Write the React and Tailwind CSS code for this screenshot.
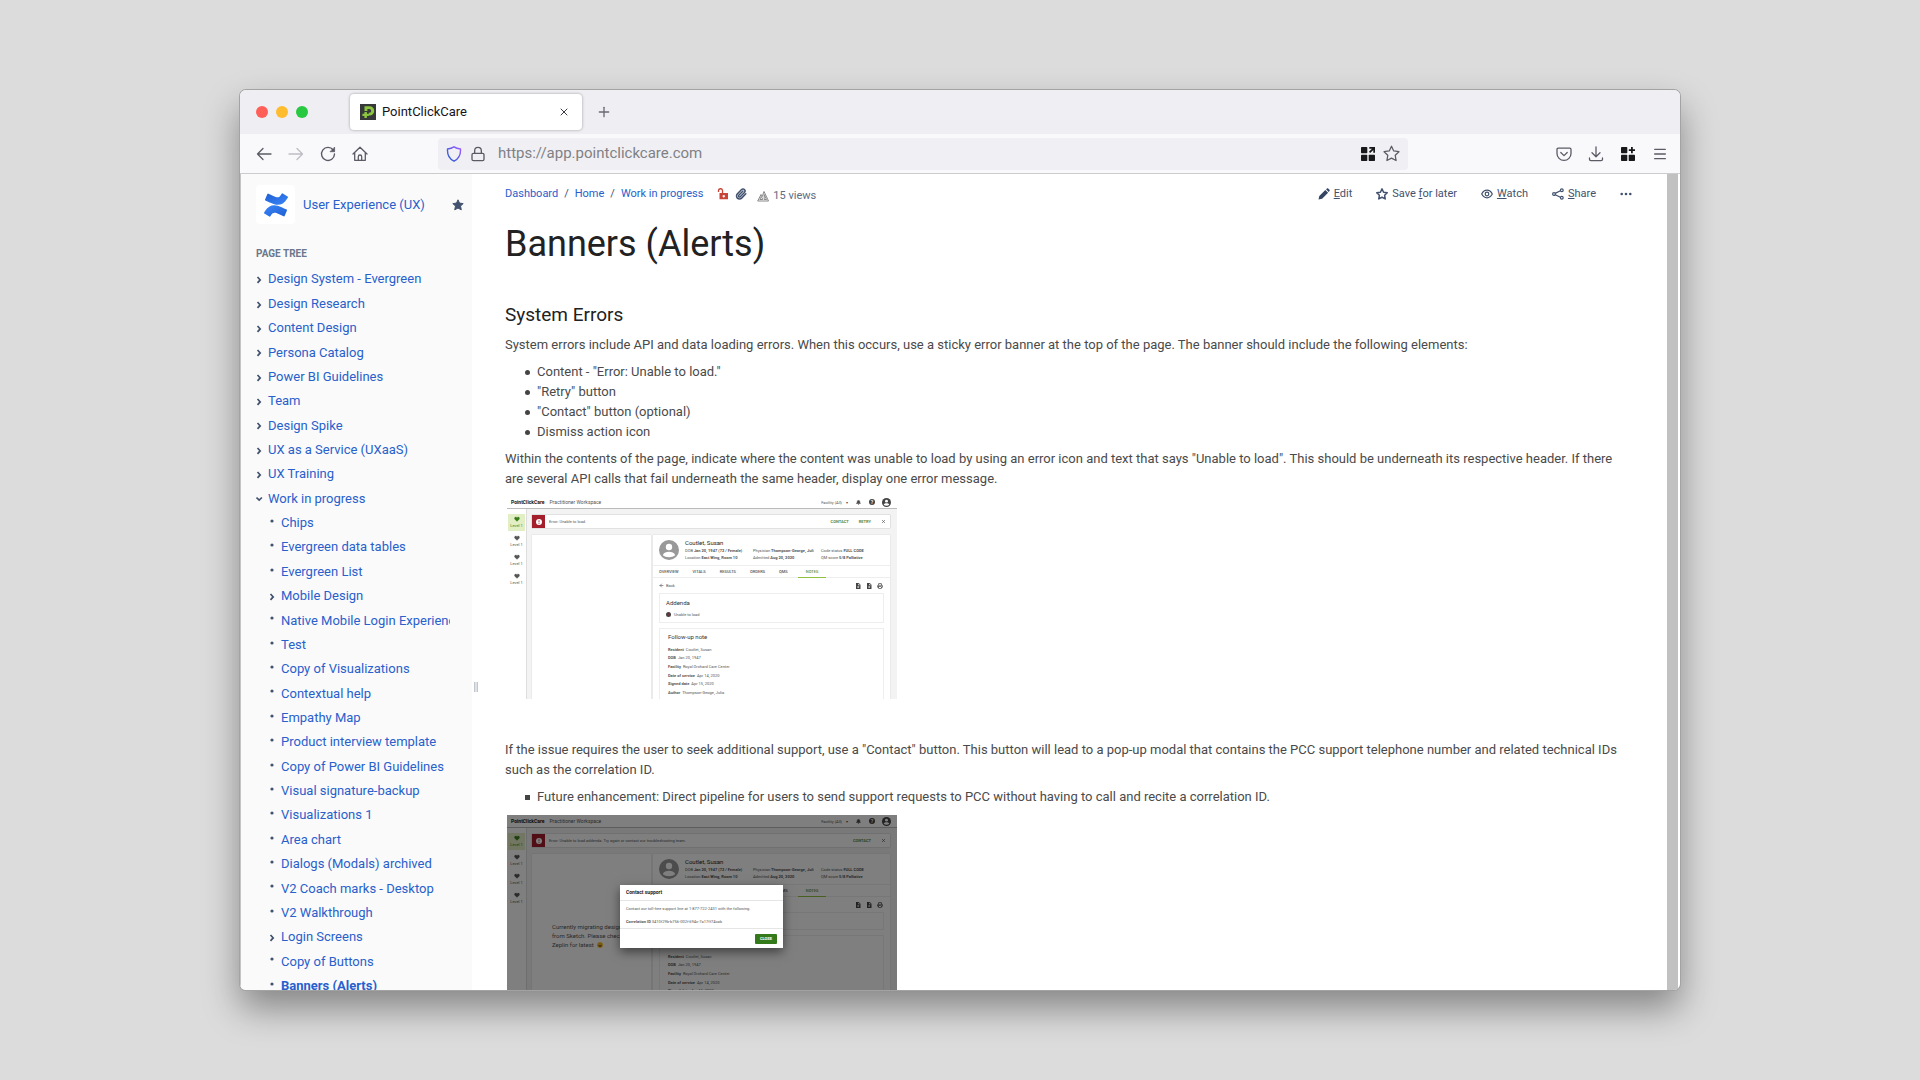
import React from 'react';
import {
  ArrowLeft,
  Bell,
  Heart,
  Lock,
  Menu,
  Paperclip,
  Plus,
  Printer,
  X
} from 'lucide-react';

const pageTree = [
  { title: 'Design System - Evergreen', type: 'closed' },
  { title: 'Design Research', type: 'closed' },
  { title: 'Content Design', type: 'closed' },
  { title: 'Persona Catalog', type: 'closed' },
  { title: 'Power BI Guidelines', type: 'closed' },
  { title: 'Team', type: 'closed' },
  { title: 'Design Spike', type: 'closed' },
  { title: 'UX as a Service (UXaaS)', type: 'closed' },
  { title: 'UX Training', type: 'closed' },
  { title: 'Work in progress', type: 'open' },
  { title: 'Chips', child: true },
  { title: 'Evergreen data tables', child: true },
  { title: 'Evergreen List', child: true },
  { title: 'Mobile Design', type: 'closed', child: true },
  { title: 'Native Mobile Login Experience', child: true },
  { title: 'Test', child: true },
  { title: 'Copy of Visualizations', child: true },
  { title: 'Contextual help', child: true },
  { title: 'Empathy Map', child: true },
  { title: 'Product interview template', child: true },
  { title: 'Copy of Power BI Guidelines', child: true },
  { title: 'Visual signature-backup', child: true },
  { title: 'Visualizations 1', child: true },
  { title: 'Area chart', child: true },
  { title: 'Dialogs (Modals) archived', child: true },
  { title: 'V2 Coach marks - Desktop', child: true },
  { title: 'V2 Walkthrough', child: true },
  { title: 'Login Screens', type: 'closed', child: true },
  { title: 'Copy of Buttons', child: true },
  { title: 'Banners (Alerts)', child: true, current: true },
];

const noteFields = [
  ['Resident', 'Coutlet, Susan'],
  ['DOB', 'Jan 20, 1947'],
  ['Facility', 'Royal Orchard Care Center'],
  ['Date of service', 'Apr 14, 2020'],
  ['Signed date', 'Apr 15, 2020'],
  ['Author', 'Thompson-Geoge, Julia'],
];

const Favicon = () => (
  <svg viewBox="0 0 16 16" className="h-4 w-4 shrink-0">
    <rect width="16" height="16" fill="#37383a" />
    <path d="M4.500 2.200h5a4.700 4.700 0 0 1 0 9.400H8.800V8.700h.6a1.800 1.800 0 0 0 0-3.600H7.400v2H4.500z" fill="#8cc63f" />
    <path d="M4.400 7.900h2.500v1.900h2v2.300h-2V14H4.400v-1.900h-2V9.800h2z" fill="#8cc63f" />
  </svg>
);

const GridIcon = ({ plus }) => (
  <svg viewBox="0 0 14 14" className="h-3.5 w-3.5" fill="#18181b">
    <rect width="6.300" height="6.300" rx=".7" />
    <rect y="7.700" width="6.300" height="6.300" rx=".7" />
    <rect x="7.700" y="7.700" width="6.300" height="6.300" rx=".7" />
    {plus ? (
      <path d="M10 0h1.800v2.200H14V4h-2.200v2.200H10V4H7.800V2.200H10z" />
    ) : (
      <path d="M8.300 0H14v5.700h-1.700V3L9.200 6.100 7.900 4.800 11 1.700H8.300z" />
    )}
  </svg>
);

const StarOutline = ({ className, strokeWidth }) => (
  <svg viewBox="0 0 16 16" className={className} fill="none" stroke="currentColor" strokeWidth={strokeWidth} strokeLinejoin="round">
    <path d="M8 1.200l2.100 4.400 4.900.7-3.500 3.400.8 4.900L8 12.300l-4.300 2.300.8-4.900L1 6.300l4.900-.7z" />
  </svg>
);

const ConfluenceLogo = () => (
  <svg viewBox="0 0 24 24" className="h-6 w-6">
    <defs>
      <linearGradient id="cfTop" x1="0" y1="0" x2="1" y2="1">
        <stop offset="0" stopColor="#1f5fd0" />
        <stop offset="1" stopColor="#3a86fb" />
      </linearGradient>
      <linearGradient id="cfBottom" x1="1" y1="1" x2="0" y2="0">
        <stop offset="0" stopColor="#1f5fd0" />
        <stop offset="1" stopColor="#3a86fb" />
      </linearGradient>
    </defs>
    <path d="M.87 18.257c-.248.382-.53.875-.763 1.245a.764.764 0 0 0 .255 1.040l4.965 3.054a.764.764 0 0 0 1.058-.26c.199-.332.454-.763.733-1.221 1.967-3.247 3.945-2.853 7.508-1.146l4.957 2.337a.764.764 0 0 0 1.028-.382l2.364-5.346a.764.764 0 0 0-.382-1 599.851 599.851 0 0 1-4.965-2.361C10.911 10.970 5.224 11.185.87 18.257z" fill="url(#cfBottom)" />
    <path d="M23.131 5.743c.249-.405.531-.875.764-1.250a.764.764 0 0 0-.256-1.034L18.675.404a.764.764 0 0 0-1.058.26c-.195.335-.451.763-.734 1.225-1.966 3.246-3.945 2.850-7.508 1.146L4.437.694a.764.764 0 0 0-1.027.382L1.046 6.422a.764.764 0 0 0 .382 1c1.039.49 3.105 1.467 4.965 2.361 6.698 3.246 12.392 3.029 16.738-4.040z" fill="url(#cfTop)" />
  </svg>
);

const TreeMarker = ({ type }) => {
  if (!type) {
    return (
      <svg viewBox="0 0 8 8" className="mb-1 h-2 w-2 shrink-0">
        <circle cx="3" cy="4" r="1.600" fill="#42526e" />
      </svg>
    );
  }
  return (
    <svg viewBox="0 0 8 8" className="mt-0.5 h-2 w-2 shrink-0" fill="none" stroke="#42526e" strokeWidth="1.700">
      {type === 'open' ? <path d="M.5 2.500l2.700 2.600 2.700-2.600" /> : <path d="M1.500 1l2.700 2.900-2.700 2.900" />}
    </svg>
  );
};

const TitleBar = () => (
  <div className="flex h-11 items-center bg-[#efeef3] pl-4">
    <div className="flex gap-2">
      <button aria-label="Close window" className="h-3 w-3 rounded-full bg-[#ff5f57]" />
      <button aria-label="Minimize window" className="h-3 w-3 rounded-full bg-[#febc2e]" />
      <button aria-label="Zoom window" className="h-3 w-3 rounded-full bg-[#28c840]" />
    </div>
    <div className="ml-[42px] flex h-9 w-[232px] items-center rounded bg-white pr-3 pl-2.5 shadow-[0_0_3px_rgba(0,0,0,0.35)]">
      <Favicon />
      <span className="ml-1.5 flex-1 text-[13px] text-[#15141a]">PointClickCare</span>
      <button aria-label="Close tab">
        <X className="h-3 w-3 text-[#3a3944]" strokeWidth={2} />
      </button>
    </div>
    <button aria-label="New tab" className="ml-3.5">
      <Plus className="h-4 w-4 text-[#6b6a75]" strokeWidth={2} />
    </button>
  </div>
);

const Toolbar = () => (
  <div className="flex h-10 items-center border-b border-[#cccccf] bg-[#f9f9fb] text-[#5b5b66]">
    <div className="flex w-[198px] shrink-0 items-center gap-4 pl-4">
      <button aria-label="Back">
        <svg viewBox="0 0 16 16" className="h-4 w-4" fill="none" stroke="currentColor" strokeWidth="1.300" strokeLinecap="round" strokeLinejoin="round">
          <path d="M15 8H1.500M7 2.500L1.500 8 7 13.500" />
        </svg>
      </button>
      <button aria-label="Forward" className="text-[#bdbdc3]">
        <svg viewBox="0 0 16 16" className="h-4 w-4" fill="none" stroke="currentColor" strokeWidth="1.300" strokeLinecap="round" strokeLinejoin="round">
          <path d="M1 8h13.500M9 2.500L14.500 8 9 13.500" />
        </svg>
      </button>
      <button aria-label="Reload">
        <svg viewBox="0 0 16 16" className="h-4 w-4" fill="none" stroke="currentColor" strokeWidth="1.400" strokeLinecap="round">
          <path d="M13.200 4A6.500 6.500 0 1 0 14.500 8" />
          <path d="M14.600 1.500v4.200h-4.200z" fill="currentColor" strokeWidth=".8" strokeLinejoin="round" />
        </svg>
      </button>
      <button aria-label="Home">
        <svg viewBox="0 0 16 16" className="h-4 w-4" fill="none" stroke="currentColor" strokeWidth="1.300" strokeLinecap="round" strokeLinejoin="round">
          <path d="M1 8l7-6.800L15 8M2.700 6.800v7.500h10.600V6.800" />
          <path d="M6.300 14v-3.300a1.700 1.700 0 0 1 3.400 0V14" />
        </svg>
      </button>
    </div>
    <div className="flex h-8 flex-1 items-center rounded bg-[#f0f0f4] px-2">
      <svg viewBox="0 0 16 16" className="h-4 w-4 shrink-0" fill="none" strokeWidth="1.400" strokeLinejoin="round">
        <defs>
          <linearGradient id="shield" x1="0" y1="1" x2="1" y2="0">
            <stop offset=".2" stopColor="#3a5bdc" />
            <stop offset="1" stopColor="#a05cff" />
          </linearGradient>
        </defs>
        <path d="M8 .8c2 1.300 4 1.900 6.500 2.200.3 5-1.300 9.500-6.500 12.200C2.800 12.500 1.200 8 1.500 3 4 2.700 6 2.100 8 .8z" stroke="url(#shield)" />
      </svg>
      <Lock className="ml-2 h-4 w-4 shrink-0" strokeWidth={2} />
      <input
        aria-label="Address"
        className="ml-3 min-w-0 flex-1 bg-transparent text-[15px] text-[#808085] outline-none"
        defaultValue="https://app.pointclickcare.com"
      />
      <button aria-label="Open in workspace">
        <GridIcon />
      </button>
      <button aria-label="Bookmark this page" className="ml-2">
        <StarOutline className="h-[17px] w-[17px]" strokeWidth="1.200" />
      </button>
    </div>
    <div className="flex w-[272px] shrink-0 items-center justify-end gap-4 pr-3">
      <button aria-label="Save to Pocket">
        <svg viewBox="0 0 16 16" className="h-4 w-4" fill="none" stroke="currentColor" strokeWidth="1.300" strokeLinecap="round" strokeLinejoin="round">
          <path d="M2.200 2.200h11.600c.7 0 1.200.5 1.200 1.200v4a7 7 0 0 1-14 0v-4c0-.7.500-1.200 1.200-1.200z" />
          <path d="M4.800 6.500L8 9.600l3.200-3.100" />
        </svg>
      </button>
      <button aria-label="Downloads">
        <svg viewBox="0 0 16 16" className="h-4 w-4" fill="none" stroke="currentColor" strokeWidth="1.300" strokeLinecap="round" strokeLinejoin="round">
          <path d="M8 .8v9.700M4 6.800l4 3.900 4-3.900M1.500 12v1.300c0 .8.600 1.400 1.400 1.400h10.200c.8 0 1.400-.6 1.400-1.400V12" />
        </svg>
      </button>
      <button aria-label="Extensions" className="px-px">
        <GridIcon plus />
      </button>
      <button aria-label="Application menu">
        <Menu className="h-4 w-4" strokeWidth={2} />
      </button>
    </div>
  </div>
);

const Sidebar = () => (
  <aside className="flex w-[232px] shrink-0 flex-col border-l border-[#c4c4c4] bg-[#fafafa] pt-[11px] pl-[15px]">
    <div className="flex items-center pr-2">
      <div className="flex h-[39px] w-[39px] items-center justify-center rounded-sm bg-white">
        <ConfluenceLogo />
      </div>
      <a href="#space" className="ml-2 flex-1 text-[13px]">User Experience (UX)</a>
      <button aria-label="Favourite space">
        <svg viewBox="0 0 12 12" className="h-3 w-3" fill="#42526e" stroke="#42526e" strokeLinejoin="round">
          <path d="M6 .8l1.500 3.300 3.700.5-2.700 2.500.8 3.700L6 9.100l-3.300 1.700.8-3.700L.8 4.600l3.700-.5z" />
        </svg>
      </button>
    </div>
    <h2 className="mt-[22px] text-[10px] leading-[15px] font-bold text-[#6b778c]">PAGE TREE</h2>
    <ul className="mt-1.5 -mb-2 grid flex-1 auto-rows-fr overflow-hidden pr-[22px] text-[13px]">
      {pageTree.map((page) => (
        <li key={page.title} className={`flex items-center gap-1 overflow-hidden whitespace-nowrap ${page.child ? 'pl-[13px]' : ''}`}>
          <TreeMarker type={page.type} />
          <a href="#page" className={page.current ? 'font-bold underline' : ''}>{page.title}</a>
        </li>
      ))}
    </ul>
  </aside>
);

const Breadcrumbs = () => (
  <div className="flex items-center text-[11px] text-[#42526e]">
    <nav aria-label="Breadcrumb" className="flex items-center">
      <a href="#dashboard">Dashboard</a>
      <span className="px-1.5">/</span>
      <a href="#home">Home</a>
      <span className="px-1.5">/</span>
      <a href="#wip">Work in progress</a>
    </nav>
    <button aria-label="Restrictions" className="ml-3.5">
      <svg viewBox="0 0 12 12" className="h-3 w-3">
        <path d="M1.500 4V3a2 2 0 0 1 4-.5V5" fill="none" stroke="#c9453a" strokeWidth="1.300" />
        <path d="M2.500 5h8.500v6.300H2.500zM6.750 7a1.200 1.200 0 1 0 .01 0z" fill="#c9453a" fillRule="evenodd" />
      </svg>
    </button>
    <button aria-label="Attachments" className="ml-1.5">
      <Paperclip className="h-3 w-3" strokeWidth={3} />
    </button>
    <a href="#analytics" className="mt-1 ml-2.5 flex items-center gap-1">
      <svg viewBox="0 0 12 12" className="h-3 w-3" fill="none" stroke="#7a7a7a" strokeWidth=".9" strokeLinejoin="round">
        <path d="M.7 11L4 4.500l1.300 2L7 1.500l4.500 9.500zM2.800 9.500L4.300 6.500l1.500 3zM7.200 4.500v5H9.500z" />
      </svg>
      <span className="text-[#5e6c84]">15 views</span>
    </a>
  </div>
);

const PageActions = () => (
  <div className="flex items-center gap-6 text-[11px] text-[#42526e]">
    <button className="flex items-center gap-1">
      <svg viewBox="0 0 12 12" className="h-3 w-3" fill="#344563">
        <path d="M.5 11.500l.8-3.600 6-6L10.100 4.700l-6 6zM8 1.200L9 .4c.4-.3.8-.3 1.100 0l1.400 1.400c.4.400.4.800 0 1.200l-.8.900z" />
      </svg>
      <span><u>E</u>dit</span>
    </button>
    <button className="flex items-center gap-1">
      <StarOutline className="h-3 w-3" strokeWidth="2" />
      <span>Save <u>f</u>or later</span>
    </button>
    <button className="flex items-center gap-1">
      <svg viewBox="0 0 12 12" className="h-3 w-3" fill="none" stroke="currentColor" strokeWidth="1.200">
        <path d="M.7 6C2 3.500 3.900 2.200 6 2.200S10 3.500 11.300 6C10 8.500 8.100 9.800 6 9.800S2 8.500.7 6z" />
        <circle cx="6" cy="6" r="1.800" />
      </svg>
      <span><u>W</u>atch</span>
    </button>
    <button className="flex items-center gap-1">
      <svg viewBox="0 0 12 12" className="h-3 w-3" fill="none" stroke="currentColor" strokeWidth="1.200">
        <path d="M3.200 5.400l5.200-2.600M3.200 6.800l5.200 2.500" />
        <circle cx="2" cy="6" r="1.400" />
        <circle cx="9.800" cy="2.200" r="1.400" />
        <circle cx="9.800" cy="9.800" r="1.400" />
      </svg>
      <span><u>S</u>hare</span>
    </button>
    <button aria-label="More actions">
      <svg viewBox="0 0 12 12" className="h-3 w-3" fill="currentColor">
        <circle cx="1.700" cy="6" r="1.300" />
        <circle cx="6" cy="6" r="1.300" />
        <circle cx="10.300" cy="6" r="1.300" />
      </svg>
    </button>
  </div>
);

const Bullet = ({ square, children }) => (
  <li className={`before:mr-[7px] before:-ml-3 before:inline-block before:h-[5px] before:w-[5px] before:bg-[#444] before:align-middle before:content-[''] ${square ? '' : 'before:rounded-full'}`}>
    {children}
  </li>
);

const AlertDot = ({ className }) => (
  <svg viewBox="0 0 10 10" className={className}>
    <circle cx="5" cy="5" r="5" fill="currentColor" />
    <path d="M5 2v3.700M5 6.700v1.500" stroke="#8a2a30" strokeWidth="1.300" />
  </svg>
);

const PersonIcon = ({ className }) => (
  <svg viewBox="0 0 20 20" className={className}>
    <circle cx="10" cy="10" r="10" fill="currentColor" />
    <circle cx="10" cy="7" r="3.200" fill="#fff" />
    <path d="M3.800 15.200c.8-2.600 3.600-3.500 6.200-3.500s5.400.9 6.200 3.500c-1.500 1.300-3.700 2-6.200 2s-4.700-.7-6.200-2z" fill="#fff" />
  </svg>
);

const DocIcon = () => (
  <svg viewBox="0 0 12 12" className="h-1.5 w-1.5" fill="#444">
    <path d="M2 0h5.500L11 3.500V12H2zM6.500 1.200V4.500H10zM5.700 6v1.500H4v1.200h1.700v1.500h1.200V8.700h1.600V7.500H6.900V6z" fillRule="evenodd" />
  </svg>
);

// Small scale example of the Practitioner Workspace
const WorkspaceExample = ({ message, actions, addenda, panelNote, children }) => (
  <figure className="relative h-[203px] w-[390px] overflow-hidden bg-[#f3f3f3] text-[4px] leading-[7px] text-[#555]">
    <div className="flex h-[13px] items-center border-b border-[#bbb] bg-white pr-1.5 pl-1 text-[5px]">
      <b className="text-[#111]">PointClickCare</b>
      <span className="ml-[5px] flex-1">Practitioner Workspace</span>
      <span className="text-[4px]">Facility (All)</span>
      <span className="ml-1 text-[4px]">▾</span>
      <Bell className="ml-2 h-[5px] w-[5px]" fill="#444" strokeWidth={3} />
      <span className="ml-2 flex h-[6px] w-[6px] items-center justify-center rounded-full bg-[#444] text-[5px] font-bold text-white">?</span>
      <PersonIcon className="ml-[7px] h-[9px] w-[9px] text-[#444]" />
    </div>
    <div className="flex h-[190px]">
      <ul className="w-5 shrink-0 space-y-0.5 border-r border-[#ddd] bg-white px-px pt-[5px]">
        {[0, 1, 2, 3].map((i) => (
          <li key={i} className={`flex h-[17px] flex-col items-center justify-center ${i === 0 ? 'bg-[#e2efc4] text-[#3a7d1c]' : ''}`}>
            <Heart className="h-[6px] w-[6px]" fill="currentColor" strokeWidth={1} />
            <span>Level 1</span>
          </li>
        ))}
      </ul>
      <div className="flex min-w-0 flex-1 flex-col pt-[6px] pr-[7px] pl-[5px]">
        <div className="flex h-[13px] shrink-0 items-center bg-white pr-1 shadow-[0_0_1px_#888]">
          <span className="mr-1 flex h-[13px] w-[13px] items-center justify-center bg-[#a31f2b]">
            <AlertDot className="h-[6px] w-[6px] text-white" />
          </span>
          <span className="flex-1 whitespace-nowrap">{message}</span>
          {actions.map((action) => (
            <b key={action} className="mr-2.5 text-[#5a8a45]">{action}</b>
          ))}
          <X className="h-[5px] w-[5px]" strokeWidth={3} />
        </div>
        <div className="mt-[7px] flex min-h-0 flex-1 gap-0.5">
          <div className="w-[119px] shrink-0 bg-white pt-[68px] pl-5 text-[6px] leading-[9px] whitespace-nowrap shadow-[0_0_1px_#bbb]">{panelNote}</div>
          <div className="flex min-w-0 flex-1 flex-col bg-white shadow-[0_0_1px_#bbb]">
            <div className="flex h-[30px] shrink-0 pt-[5px] pl-1.5">
              <PersonIcon className="h-5 w-5 text-[#999]" />
              <div className="ml-1.5 w-[68px] whitespace-nowrap">
                <p className="-mt-px text-[6px] leading-[8px] text-[#222]">Coutlet, Susan</p>
                <p>DOB <b>Jan 20, 1947 (72 / Female)</b></p>
                <p>Location <b>East Wing, Room 10</b></p>
              </div>
              <div className="w-[68px] pt-[7px] whitespace-nowrap">
                <p>Physician <b>Thompson-George, Juli</b></p>
                <p>Admitted <b>Aug 20, 2020</b></p>
              </div>
              <div className="pt-[7px] whitespace-nowrap">
                <p>Code status <b>FULL CODE</b></p>
                <p>QM score <b>5/8 Palliative</b></p>
              </div>
            </div>
            <div className="flex h-[13px] shrink-0 items-center gap-[14px] border-y border-[#eee] pl-1.5 font-medium">
              <span>OVERVIEW</span>
              <span>VITALS</span>
              <span>RESULTS</span>
              <span>ORDERS</span>
              <span>QMS</span>
              <span className="-mx-1 flex h-[13px] items-center border-b border-[#8fbf3f] px-2 text-[#5a8a45]">NOTES</span>
            </div>
            <div className="flex h-[15px] shrink-0 items-center pr-[7px] pl-1.5">
              <ArrowLeft className="h-[5px] w-[5px]" strokeWidth={3} />
              <span className="ml-0.5 flex-1">Back</span>
              <div className="flex gap-[5px]">
                <DocIcon />
                <DocIcon />
                <Printer className="h-1.5 w-1.5" strokeWidth={3} />
              </div>
            </div>
            <div className="mx-1.5 shrink-0 border border-[#eee]">
              {addenda ? (
                <div className="flex h-7 flex-col justify-center gap-[5px] pl-1.5">
                  <p className="text-[6px] text-[#333]">Addenda</p>
                  <p className="flex items-center gap-[3px]">
                    <AlertDot className="h-[5px] w-[5px] text-[#444]" />
                    Unable to load
                  </p>
                </div>
              ) : (
                <div className="h-4" />
              )}
            </div>
            <div className="mx-1.5 mt-[5px] flex-1 border border-b-0 border-[#eee] pt-1 pl-2">
              <p className="text-[6px] leading-[8px] text-[#333]">Follow-up note</p>
              <div className="mt-1 grid h-[52px] auto-rows-fr items-center">
                {noteFields.map(([label, value]) => (
                  <p key={label}><b>{label}</b>&nbsp; {value}</p>
                ))}
              </div>
            </div>
          </div>
        </div>
      </div>
    </div>
    {children}
  </figure>
);

const ContactDialog = () => (
  <div className="absolute inset-0 flex items-start bg-black/50 pt-[70px] pl-[113px]">
    <div className="w-[163px] bg-white shadow-[0_4px_10px_rgba(0,0,0,0.5)]">
      <h3 className="flex h-4 items-center border-b border-[#e5e5e5] pl-1.5 text-[5px] font-bold text-[#222]">Contact support</h3>
      <div className="flex h-7 flex-col justify-center gap-1.5 border-b border-[#e5e5e5] pl-1.5 whitespace-nowrap">
        <p>Contact our toll-free support line at 1-877-722-2431 with the following.</p>
        <p><b>Correlation ID</b> 3410f29b-b756-002f-694c-7a17ff74cab</p>
      </div>
      <div className="flex h-[19px] items-center justify-end pr-1.5">
        <button className="h-2.5 w-[22px] rounded-[1px] bg-[#357a1a] text-[4px] leading-[10px] font-bold text-white">CLOSE</button>
      </div>
    </div>
  </div>
);

const Smiley = () => (
  <svg viewBox="0 0 12 12" className="ml-0.5 inline-block h-1.5 w-1.5">
    <circle cx="6" cy="6" r="6" fill="#ffc83d" />
    <path d="M2.500 6.500h7c0 4-7 4-7 0z" fill="#7a4a12" />
    <path d="M3 4.500l1.500-1 1 1M6.700 4.500l1-1 1.500 1" fill="none" stroke="#7a4a12" />
  </svg>
);

const PageContent = () => (
  <main className="min-w-0 flex-1 overflow-hidden pt-2.5 pr-[35px] pl-[25px] text-[13px] leading-5 text-[#4a4a4a]">
    <div className="flex h-5 items-center justify-between">
      <Breadcrumbs />
      <PageActions />
    </div>
    <h1 className="mt-[18px] text-[36px] leading-[44px] text-[#222]">Banners (Alerts)</h1>
    <h2 className="mt-[37px] text-[19px] leading-6 text-[#222]">System Errors</h2>
    <p className="mt-2">
      System errors include API and data loading errors. When this occurs, use a sticky error banner at the top of the page. The banner should include the following elements:
    </p>
    <ul className="mt-[7px] pl-8">
      <Bullet>Content - "Error: Unable to load."</Bullet>
      <Bullet>"Retry" button</Bullet>
      <Bullet>"Contact" button (optional)</Bullet>
      <Bullet>Dismiss action icon</Bullet>
    </ul>
    <p className="mt-[7px]">
      Within the contents of the page, indicate where the content was unable to load by using an error icon and text that says "Unable to load". This should be underneath its respective header. If there are several API calls that fail underneath the same header, display one error message.
    </p>
    <div className="mt-[7px] ml-0.5">
      <WorkspaceExample message="Error: Unable to load." actions={['CONTACT', 'RETRY']} addenda />
    </div>
    <p className="mt-[41px]">
      If the issue requires the user to seek additional support, use a "Contact" button. This button will lead to a pop-up modal that contains the PCC support telephone number and related technical IDs such as the correlation ID.
    </p>
    <ul className="mt-[7px] pl-8">
      <Bullet square>Future enhancement: Direct pipeline for users to send support requests to PCC without having to call and recite a correlation ID.</Bullet>
    </ul>
    <div className="mt-2 ml-0.5">
      <WorkspaceExample
        message="Error: Unable to load addenda. Try again or contact our troubleshooting team."
        actions={['CONTACT']}
        panelNote={
          <>
            Currently migrating designs<br />
            from Sketch. Please check<br />
            Zeplin for latest <Smiley />
          </>
        }
      >
        <ContactDialog />
      </WorkspaceExample>
    </div>
  </main>
);

const App = () => (
  <div className="flex h-screen bg-[#dcdcdc] px-60 py-[90px] font-[Roboto,'Liberation_Sans',sans-serif] [&_aside_a]:text-[#2860cc] [&_nav_a]:text-[#2860cc]">
    <div className="flex min-w-0 flex-1 flex-col overflow-hidden rounded-md bg-white shadow-[0_0_0_1px_#a3a3a3,0_18px_36px_rgba(0,0,0,0.4)]">
      <TitleBar />
      <Toolbar />
      <div className="flex min-h-0 flex-1">
        <Sidebar />
        <div className="flex w-2 shrink-0 items-start pt-[508px] pl-0.5">
          <div className="h-2.5 w-1 border-x border-[#c1c7d0] bg-[#dfe1e6]" />
        </div>
        <PageContent />
        <div className="mr-0.5 w-[11px] shrink-0 bg-[#c1c1c1]" />
      </div>
    </div>
  </div>
);

export default App;
